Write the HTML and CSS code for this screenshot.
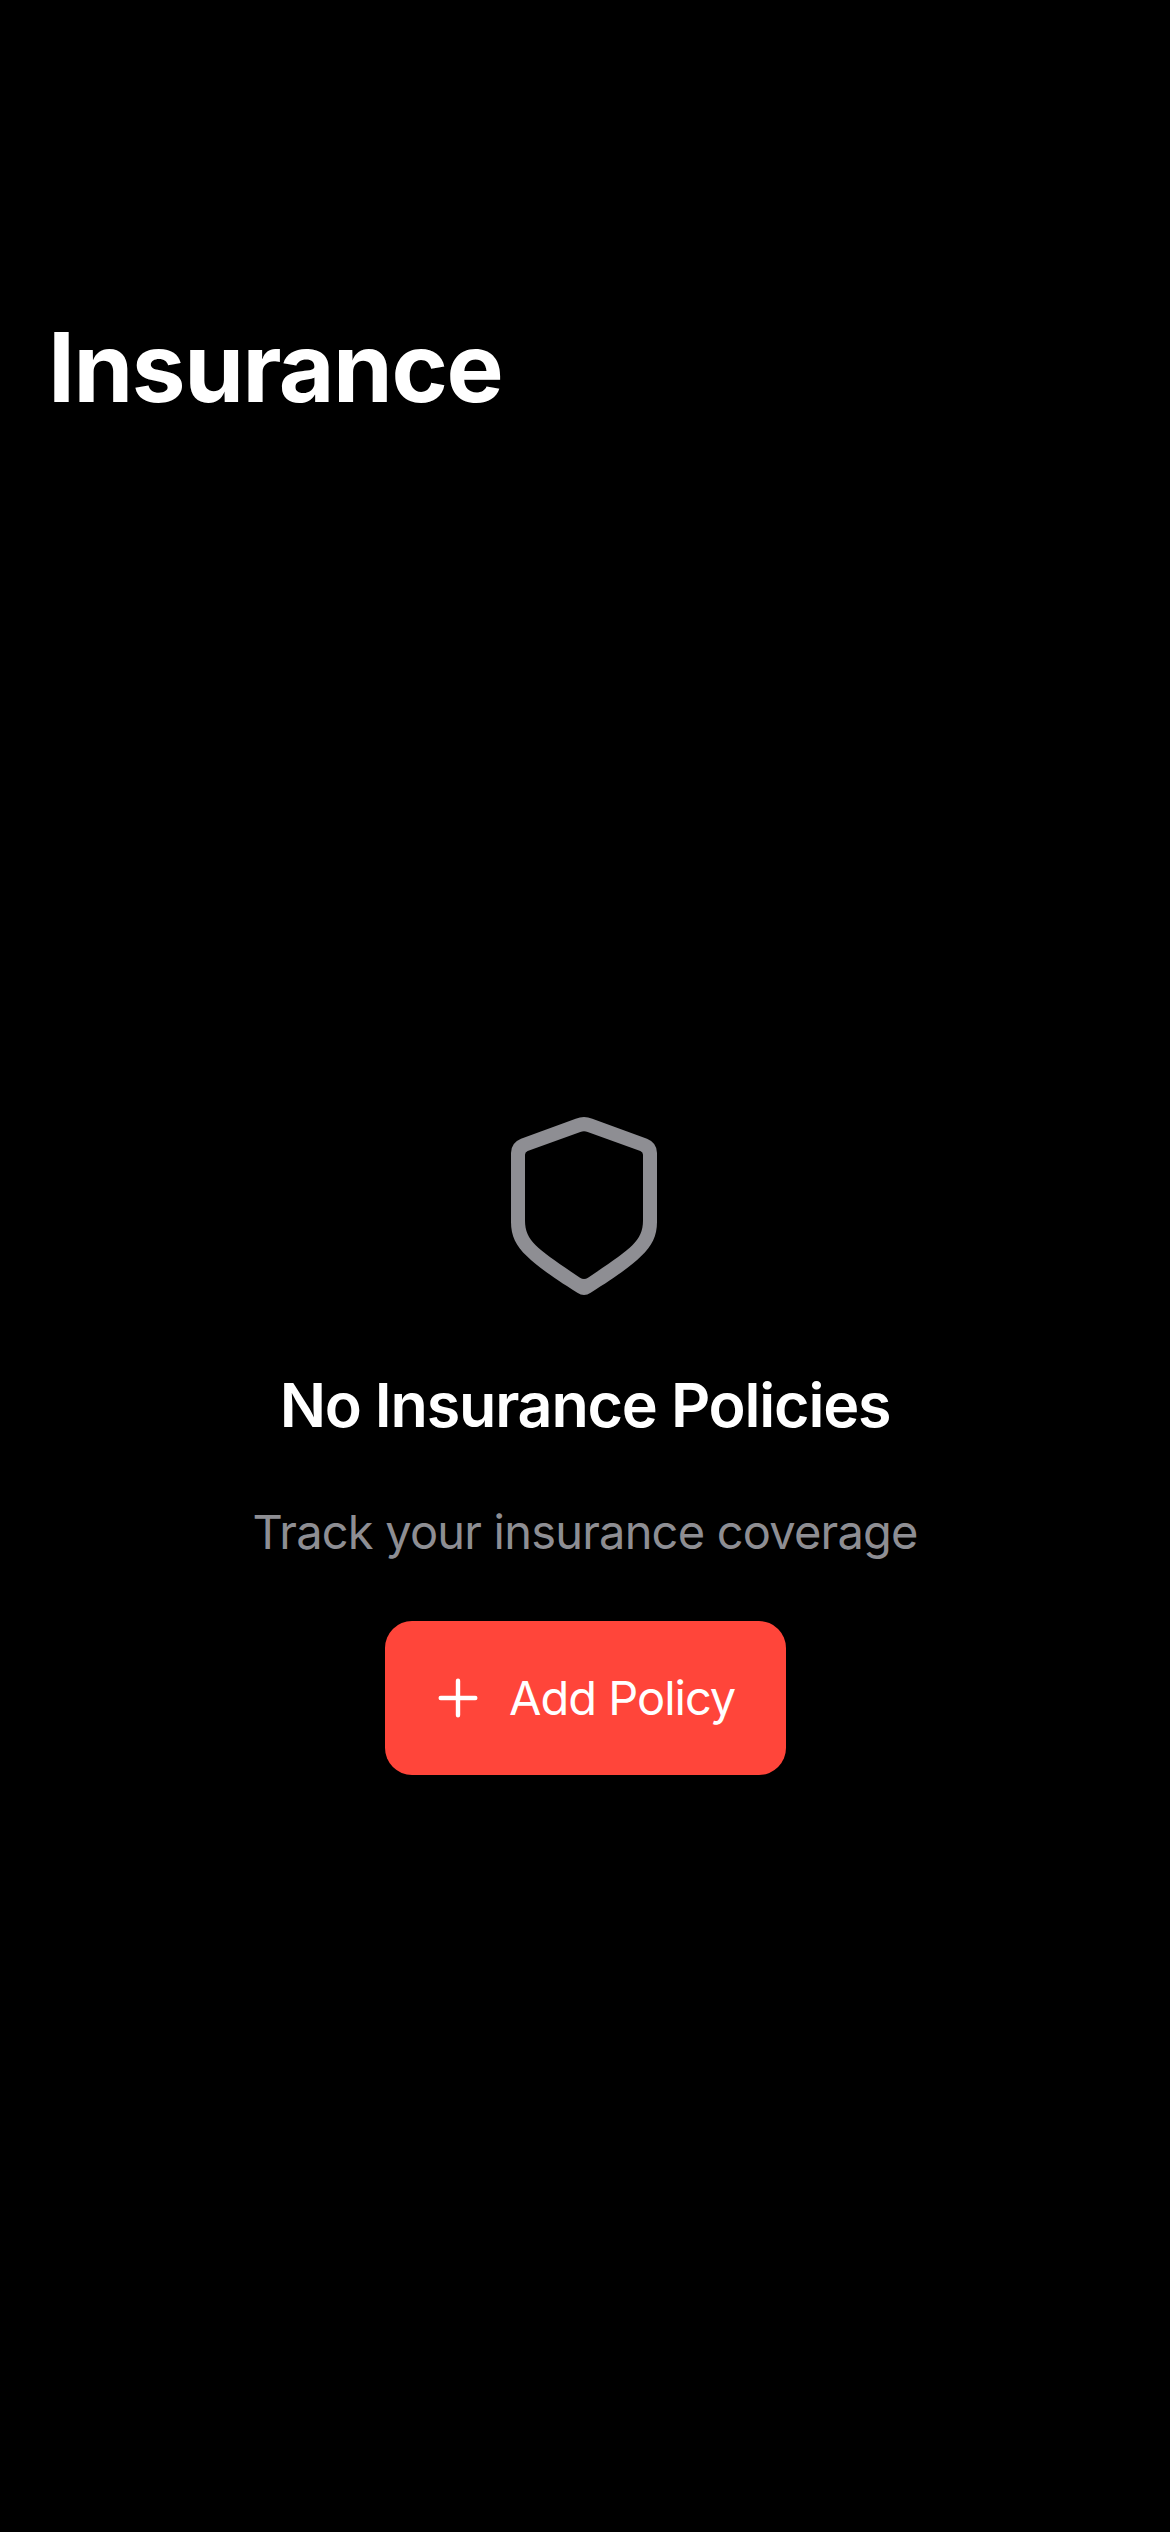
FILE: index.html
```html
<!DOCTYPE html>
<html lang="en">
<head>
<meta charset="utf-8">
<title>Insurance</title>
<link rel="stylesheet" href="styles.css">
</head>
<body>
<header class="header"><h1 class="title">Insurance</h1></header>
<main class="empty">
<svg class="shield" viewBox="63 51 438 534" aria-hidden="true"><path fill-rule="evenodd" d="M282 51Q294 51 307 56L471 116Q501 128 501 159V366C501 408 486 438 453 469C423 498 376 532 302 578Q292 585 282 585Q272 585 262 578C188 532 141 498 111 469C78 438 63 408 63 366V159Q63 128 93 116L257 56Q270 51 282 51ZM282 94Q276 94 271 96L113 153Q105 156 105 164V362C105 392 115 413 137 436C162 460 205 490 270 533Q276 537 282 537Q288 537 294 533C359 490 402 460 427 436C449 413 459 392 459 362V164Q459 156 451 153L293 96Q288 94 282 94Z"/></svg>
<h2 class="heading">No Insurance Policies</h2>
<p class="subtitle">Track your insurance coverage</p>
<button class="button" type="button"><svg class="plus" viewBox="0 0 40 40" aria-hidden="true"><path d="M20 2.700V37.300M2.700 20H37.300"/></svg><span class="label">Add Policy</span></button>
</main>
</body>
</html>
```
FILE: styles.css
```css
* { box-sizing: border-box; }
body { margin: 0; height: 2532px; background: #000; color: #fff; font-family: Inter, sans-serif; display: flex; flex-direction: column; }
.header { height: 450px; padding: 306px 48px 0; }
.title { margin: 0; font-size: 96px; line-height: 122px; font-weight: 700; letter-spacing: -1.45px; }
.empty { display: flex; flex-direction: column; align-items: center; padding-top: 667px; }
.shield { width: 146px; height: 178px; margin-right: 2px; fill: #8e8e93; }
.heading { margin: 72px 0 0; font-size: 61px; line-height: 76px; font-weight: 600; letter-spacing: -1.2px; white-space: nowrap; }
.subtitle { margin: 56px 0 0; font-size: 47px; line-height: 66px; letter-spacing: -0.8px; color: #8e8e93; white-space: nowrap; }
.button { margin: 56px 0 0 1px; width: 401px; height: 154px; padding: 0 0 0 53px; border: 0; border-radius: 27px; background: #ff453a; color: #fff; font: 400 47px/60px Inter, sans-serif; letter-spacing: -1px; display: flex; align-items: center; }
.plus { width: 40px; height: 40px; margin-right: 31px; fill: none; stroke: #fff; stroke-width: 4.4; stroke-linecap: round; }
.label { white-space: nowrap; }
```
